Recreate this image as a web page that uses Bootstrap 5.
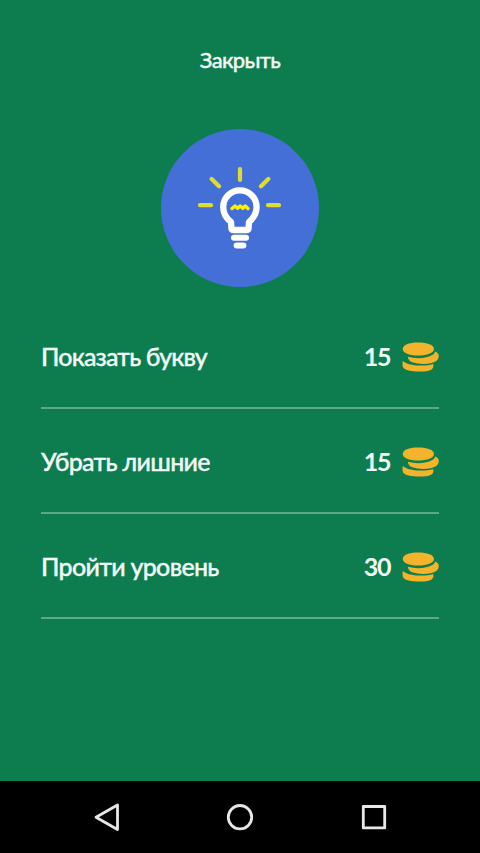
<!DOCTYPE html>
<html lang="ru">
<head>
<meta charset="utf-8">
<meta name="viewport" content="width=device-width, initial-scale=1">
<title>Подсказки</title>
<link href="https://cdn.jsdelivr.net/npm/bootstrap@5.3.0/dist/css/bootstrap.min.css" rel="stylesheet">
<style>
body{background:#0d7d50;color:#f1fbf5;font-family:Lato,"Open Sans",sans-serif;font-weight:500;overflow:hidden}
.close-link{color:inherit;font-size:22px;line-height:28px;padding:46px 0 0;letter-spacing:-.68px;-webkit-text-stroke:.35px #f1fbf5}
.hint-logo{width:158px;height:158px;margin-top:54.500px;background:#446fd6}
.hint-list{padding:17.500px 41px 0}
.hint-row{height:105px;padding-top:2px;border-bottom:2px solid #5ea986;font-size:25px;line-height:1}
.label{letter-spacing:-.7px;-webkit-text-stroke:.35px #f1fbf5}
.label-tight{letter-spacing:-.83px}
.price{font-size:25px;font-weight:700;letter-spacing:-1.400px;margin-right:12px}
.sys-bar{height:72px;background:#000}
</style>
<script src="https://cdn.jsdelivr.net/npm/bootstrap@5.3.0/dist/js/bootstrap.bundle.min.js" defer></script>
</head>
<body>
<svg class="d-none">
<symbol id="coins" viewBox="0 0 38 30" preserveAspectRatio="none"><g fill="#f3b32a"><path d="M.8 19C3 21.300 9 23 15 23.400c7 .5 12.500 0 17-1.400.8 3.200-.2 5-2.500 6-4 1.500-9 1.700-15 1.400C8 29 2.500 28 1.200 25.500.4 24 .4 21 .8 19z"/><path d="M6 14.800c9 2.500 19 1.800 26-2.300 1.300-.8 1.800-1.700 1.700-3 3.500 1.200 4.400 3 4 5.500-.3 3-3 5-7.300 6-6 1.500-14 1.200-19-.4-3.200-1-5.200-2.700-5.400-5.800z"/><path d="M.8 7C.8 3 7 .6 16.500.6S32.800 3 32.800 7s-6.800 6.500-16.300 6.500S.8 11 .8 7z"/></g></symbol>
</svg>
<div class="vh-100 d-flex flex-column">
<main class="flex-grow-1 d-flex flex-column align-items-center">
<a href="#" class="close-link text-decoration-none">Закрыть</a>
<div class="hint-logo rounded-circle">
<svg class="d-block" width="158" height="158" viewBox="161 128.500 158 158" fill="none" stroke-linecap="round" stroke-linejoin="round">
<g stroke="#dfdb31" stroke-width="4.200"><path d="M240 168.700v10.800M211.700 178.500l7.300 7.300M268.300 178.500l-7.300 7.300M200 204.700h11M268 204.700h11"/></g>
<path d="M231.500 228.500L231 221.500C226.500 218 223.200 213.500 223.200 206.500A16.700 16.700 0 0 1 256.600 206.500C256.600 213.500 253 218 249 221.500L248.500 228.500Q248 229.500 246.500 229.500H233.500Q232 229.500 231.500 228.500Z" stroke="#fff" stroke-width="6.300"/>
<path d="M234 237.200h12M236.600 245.100h6.800" stroke="#fff" stroke-width="6"/>
<path d="M232 208l3-2.500 2.600 2.300 2.600-2.300 2.600 2.300 2.400-2.300 2.700 2.500" stroke="#fff100" stroke-width="3.500"/>
</svg>
</div>
<div class="hint-list w-100 d-flex flex-column">
<div class="hint-row d-flex align-items-center"><span class="label label-tight me-auto">Показать букву</span><span class="price">15</span><svg width="37" height="30"><use href="#coins"/></svg></div>
<div class="hint-row d-flex align-items-center"><span class="label me-auto">Убрать лишние</span><span class="price">15</span><svg width="37" height="30"><use href="#coins"/></svg></div>
<div class="hint-row d-flex align-items-center"><span class="label me-auto">Пройти уровень</span><span class="price">30</span><svg width="37" height="30"><use href="#coins"/></svg></div>
</div>
</main>
<nav class="sys-bar flex-shrink-0">
<svg class="d-block" width="480" height="72" viewBox="0 781 480 72" fill="none" stroke="#e8e8e8" stroke-width="2.800" stroke-linejoin="round"><path d="M117.500 805v24.500L96 817.200z"/><circle cx="240" cy="817.200" r="11.700"/><path d="M363.300 806.500h21.400v21.400h-21.400z"/></svg>
</nav>
</div>
</body>
</html>
